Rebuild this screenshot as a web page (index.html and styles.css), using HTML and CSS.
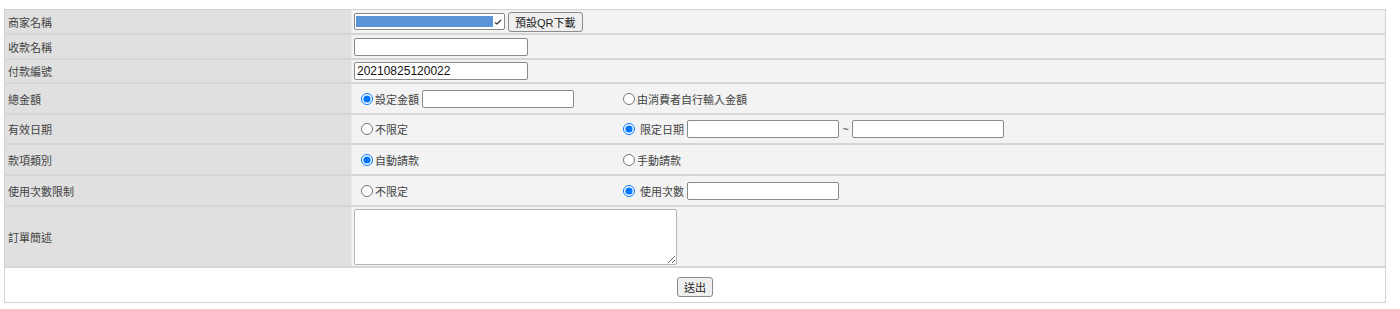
FILE: index.html
```html
<!DOCTYPE html>
<html lang="zh-Hant">
<head>
  <meta charset="UTF-8">
  <title>收款設定</title>
  <link rel="stylesheet" href="styles.css">
</head>
<body>
  <table class="form-table">
    <tr class="row-a">
      <td class="label">商家名稱</td>
      <td class="value">
        <span class="fake-select">
          <span class="mask"></span>
          <svg class="arrow" width="8" height="6" viewBox="0 0 8 6"><path d="M1 3.5 L3 5 L7 1" fill="none" stroke="#333" stroke-width="1.2"/></svg>
        </span>
        <button class="btn">預設QR下載</button>
      </td>
    </tr>
    <tr class="row-b">
      <td class="label">收款名稱</td>
      <td class="value"><input class="text" type="text"></td>
    </tr>
    <tr class="row-c">
      <td class="label">付款編號</td>
      <td class="value"><input class="text" type="text" value="20210825120022"></td>
    </tr>
    <tr class="row-d">
      <td class="label">總金額</td>
      <td class="value">
        <div class="opts">
          <label class="opt"><input type="radio" name="amt" checked>設定金額 <input class="text short" type="text"></label>
          <label class="opt"><input type="radio" name="amt">由消費者自行輸入金額</label>
        </div>
      </td>
    </tr>
    <tr class="row-d short-row">
      <td class="label">有效日期</td>
      <td class="value">
        <div class="opts">
          <label class="opt"><input type="radio" name="date">不限定</label>
          <label class="opt"><input type="radio" name="date" checked> 限定日期 <input class="text short" type="text"> ~ <input class="text short" type="text"></label>
        </div>
      </td>
    </tr>
    <tr class="row-d">
      <td class="label">款項類別</td>
      <td class="value">
        <div class="opts">
          <label class="opt"><input type="radio" name="kind" checked>自動請款</label>
          <label class="opt"><input type="radio" name="kind">手動請款</label>
        </div>
      </td>
    </tr>
    <tr class="row-d">
      <td class="label">使用次數限制</td>
      <td class="value">
        <div class="opts">
          <label class="opt"><input type="radio" name="times">不限定</label>
          <label class="opt"><input type="radio" name="times" checked> 使用次數 <input class="text short" type="text"></label>
        </div>
      </td>
    </tr>
    <tr class="row-e">
      <td class="label">訂單簡述</td>
      <td class="value"><textarea class="memo"></textarea></td>
    </tr>
    <tr class="row-submit">
      <td colspan="2"><button class="btn">送出</button></td>
    </tr>
  </table>
</body>
</html>
```

FILE: styles.css
```css
body {
  margin: 9px 14px 0 4px;
  background: #ffffff;
  font-family: "Liberation Sans", "Noto Sans CJK TC", sans-serif;
  font-size: 11px;
  color: #444;
}

.form-table {
  width: 100%;
  border-collapse: collapse;
  border: 1px solid #d2d2d2;
}

.form-table td {
  border-bottom: 2px solid #d6d6d6;
  padding: 0;
  vertical-align: middle;
}

.label {
  width: 343px;
  background: #dfe0df;
  padding-left: 3px !important;
  border-right: 1px solid #eaeaea;
}

.value {
  background: #f2f3f2;
  padding-left: 2px !important;
}

.row-a td { height: 23px; }
.row-b td { height: 23px; }
.row-c td { height: 22px; }
.row-d td { height: 29px; }
.row-d.short-row td { height: 28px; }
.row-e td { height: 59px; }

.row-submit td {
  height: 30px;
  background: #ffffff;
  text-align: center;
  border-bottom: 1px solid #d2d2d2;
  padding-top: 4px;
}

.fake-select {
  display: inline-flex;
  align-items: center;
  width: 146px;
  height: 15px;
  border: 1px solid #8a8a8a;
  border-radius: 2px;
  background: #fff;
  vertical-align: middle;
  padding: 0 2px 0 1px;
  box-sizing: content-box;
}

.fake-select .mask {
  flex: 1;
  height: 11px;
  background: #5a94d6;
}

.fake-select .arrow {
  margin-left: 1px;
}

.btn {
  font-family: "Liberation Sans", "Noto Sans CJK TC", sans-serif;
  font-size: 11px;
  color: #222;
  background: #efefef;
  border: 1px solid #8a8a8a;
  border-radius: 3px;
  padding: 1px 6px;
  height: 20px;
  vertical-align: middle;
  margin-left: 0;
}

.text {
  width: 168px;
  height: 16px;
  border: 1px solid #8a8a8a;
  border-radius: 2px;
  padding: 0 2px;
  font-family: "Liberation Sans", sans-serif;
  font-size: 12px;
  color: #111;
  vertical-align: middle;
  box-sizing: content-box;
  margin: 0;
}

.text.short {
  width: 146px;
}

.opts {
  display: flex;
  align-items: center;
  padding-left: 6px;
}

.opt {
  display: inline-flex;
  align-items: center;
  white-space: pre;
}

.opt:first-child {
  width: 262px;
}

.opt input[type="radio"] {
  margin: 0 2px 0 1px;
  width: 12px;
  height: 12px;
}

.memo {
  width: 317px;
  height: 50px;
  border: 1px solid #b5b5b5;
  border-radius: 2px;
  margin: 1px 0 0 0;
  padding: 2px;
  resize: both;
  vertical-align: middle;
  display: block;
}
```
